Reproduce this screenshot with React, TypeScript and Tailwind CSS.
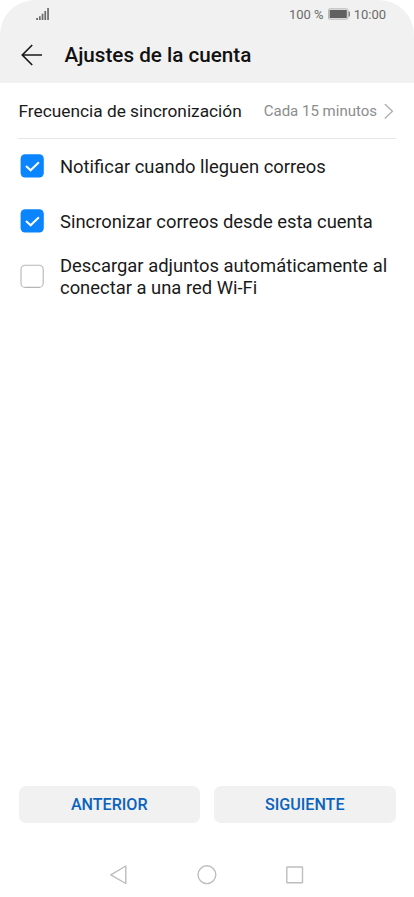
import React from "react";

function Check({ on }: { on: boolean }) {
  return on ? (
    <svg width="24" height="24" viewBox="0 0 24 24" className="shrink-0">
      <rect x="0.6" y="0.3" width="23.2" height="23.2" rx="4.5" fill="#0a84ff" />
      <path d="M6 12L10.6 16.3L18.9 8.2" fill="none" stroke="#fff" strokeWidth="2" />
    </svg>
  ) : (
    <svg width="24" height="24" viewBox="0 0 24 24" className="shrink-0">
      <rect x="1" y="1.2" width="22.2" height="22.2" rx="4.2" fill="#fff" stroke="#b5b5b5" strokeWidth="1.1" />
    </svg>
  );
}

function Row({ on, children }: { on: boolean; children: React.ReactNode }) {
  return (
    <div className="flex h-[55px] items-center gap-4 pl-5">
      <Check on={on} />
      <div className="whitespace-nowrap pt-[3px] text-[18.4px] leading-[22px] text-[#1a1a1a]">{children}</div>
    </div>
  );
}

export default function App() {
  return (
    <div className="flex h-[897px] w-[414px] flex-col overflow-hidden bg-white font-['Roboto',sans-serif]">
      <header className="h-[83px] shrink-0 rounded-t-[35px] bg-[#f1f1f1]">
        <div className="flex h-[28px] items-center justify-between pl-9 pr-7 text-[13px] text-[#6a6a6a]">
          <svg width="14" height="12" viewBox="0 0 14 12" fill="#6a6a6a">
            <path d="M0.2 10H2V12H0.2zM3 8.2h1.7V12H3zM5.7 5.7h1.7V12H5.7zM8.4 3h1.7v9H8.4zM11.2 0h1.7v12h-1.7z" />
          </svg>
          <div className="flex items-center gap-[4px]">
            <span className="pt-px">100 %</span>
            <svg width="22" height="12" viewBox="0 0 22 12">
              <rect x="0.4" y="0.9" width="19.6" height="10.2" rx="1.5" fill="#f1f1f1" stroke="#a8a8a8" strokeWidth="0.9" />
              <rect x="1.6" y="2" width="17.2" height="8" fill="#606060" />
              <rect x="20.6" y="3.5" width="1.3" height="5" rx="0.5" fill="#777" />
            </svg>
            <span className="pt-px">10:00</span>
          </div>
        </div>
        <div className="flex h-[54px] items-center gap-[22.5px] pl-[21px]">
          <svg width="21" height="22" viewBox="0 0 21 22" fill="none" stroke="#1a1a1a" strokeWidth="1.7">
            <path d="M21 11H1.3M11.2 1L1.3 11L11.2 21" />
          </svg>
          <h1 className="text-[20.65px] font-medium text-[#111]">Ajustes de la cuenta</h1>
        </div>
      </header>
      <main className="grow">
        <div className="mx-[18px] flex h-[56px] items-center justify-between border-b border-[#e7e7e7] pl-[0.5px] pr-[2px] pt-[2px]">
          <span className="text-[17.3px] text-[#1a1a1a]">Frecuencia de sincronización</span>
          <div className="flex items-center gap-[7px] text-[15px] text-[#8c8c8c]">
            <span>Cada 15 minutos</span>
            <svg width="10" height="16" viewBox="0 0 10 16" fill="none" stroke="#b0b0b0" strokeWidth="1.4">
              <path d="M0.8 0L8.4 7.3L0.8 14.6" />
            </svg>
          </div>
        </div>
        <div className="-mt-px">
          <Row on>Notificar cuando lleguen correos</Row>
          <Row on>Sincronizar correos desde esta cuenta</Row>
          <Row on={false}>Descargar adjuntos automáticamente al<br />conectar a una red Wi-Fi</Row>
        </div>
      </main>
      <div className="mb-[40px] flex gap-[14px] px-[18.5px]">
        <button className="h-[37px] flex-1 rounded-[7px] bg-[#f1f1f1] pt-[2px] text-[16.1px] font-medium text-[#0b63bd]">ANTERIOR</button>
        <button className="h-[37px] flex-1 rounded-[7px] bg-[#f1f1f1] pt-[2px] text-[16.1px] font-medium text-[#0b63bd]">SIGUIENTE</button>
      </div>
      <nav className="flex h-[34px] justify-center">
        <svg width="200" height="24" viewBox="0 0 200 24" fill="none" stroke="#bdbdbd" strokeWidth="1.4" strokeLinejoin="round">
          <path d="M3.8 11.8L18.8 3V20.5Z" />
          <circle cx="99.9" cy="11.7" r="8.9" />
          <rect x="179.8" y="4" width="15.7" height="15.7" rx="0.5" />
        </svg>
      </nav>
    </div>
  );
}
